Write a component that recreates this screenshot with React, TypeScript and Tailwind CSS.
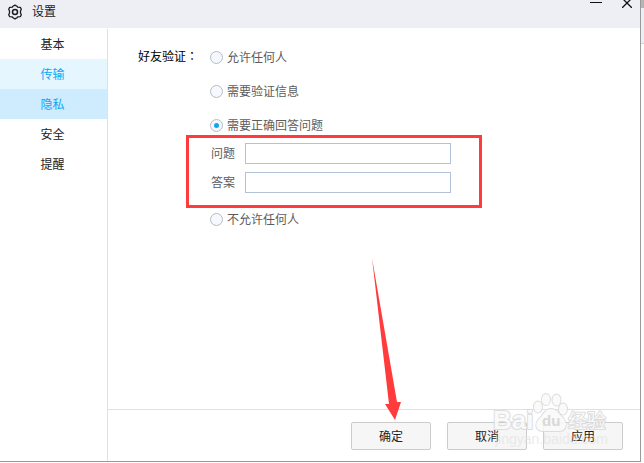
import { useState } from "react";

const navItems = ["基本", "传输", "隐私", "安全", "提醒"];

function navStyle(item: string) {
  if (item === "传输") return "bg-[#e6f6ff] text-[#10a5f5]";
  if (item === "隐私") return "bg-[#cfecff] text-[#10a5f5]";
  return "text-[#222222]";
}

function GearIcon() {
  return (
    <svg width="16" height="16" viewBox="0 0 16 16" fill="none" stroke="#1c1c1c" strokeWidth="1.3" strokeLinejoin="round" aria-hidden="true">
      <path d="M6 2.200 8 1.100l2 1.100.6 1 2.700.1 1 1.900-.8 1.800v2l.8 1.800-1 1.900-2.700.1-.6 1L8 14.900l-2-1.100-.6-1-2.700-.1-1-1.900.8-1.800V7l-.8-1.800 1-1.900 2.700-.1z" />
      <circle cx="8" cy="8" r="2.500" strokeWidth="1.500" />
    </svg>
  );
}

function TitleBar() {
  return (
    <header className="flex h-7 shrink-0 items-start justify-between bg-[#eeeff5] pr-2 pl-[7px]">
      <div className="flex items-center gap-[9px] pt-[3px]">
        <GearIcon />
        <h1 className="pt-px leading-4 text-[#222222]">设置</h1>
      </div>
      <div className="flex gap-5">
        <button type="button" aria-label="最小化" className="h-2">
          <svg width="12" height="8" viewBox="0 0 12 8" aria-hidden="true">
            <rect y="2" width="12" height="1" fill="#111111" />
          </svg>
        </button>
        <button type="button" aria-label="关闭" className="h-2">
          <svg width="10" height="8" viewBox="0 0 10 8" fill="none" stroke="#111111" strokeWidth="1.3" aria-hidden="true">
            <path d="M0-2 10 8M10-2 0 8" />
          </svg>
        </button>
      </div>
    </header>
  );
}

type ChoiceProps = { label: string; checked: boolean; onSelect: () => void };

function Choice({ label, checked, onSelect }: ChoiceProps) {
  return (
    <label className="flex h-[34px] items-center gap-1 text-[#5c5c5c]">
      <input
        type="radio"
        name="verify"
        checked={checked}
        onChange={onSelect}
        className="grid size-[13px] appearance-none place-items-center rounded-full border border-[#b6bcc4] bg-[#f5f9ff] before:size-[5px] before:rounded-full checked:before:bg-[#10a5f5]"
      />
      <span className="pt-0.5">{label}</span>
    </label>
  );
}

function Field({ id, label }: { id: string; label: string }) {
  return (
    <div className="flex items-center gap-2">
      <label htmlFor={id} className="w-[27px] pl-px text-[#5c5c5c]">{label}</label>
      <input id={id} type="text" className="h-[21px] w-[206px] border border-[#b4c2d7] bg-white px-1 outline-none" />
    </div>
  );
}

function ArrowMark() {
  return (
    <svg className="pointer-events-none absolute bottom-full left-5 mb-[2px]" width="32" height="162" viewBox="0 0 32 162" fill="#ff3b3b" aria-hidden="true">
      <path d="M1 0 26 144 30 144 24 162 14 146 18 146z" />
    </svg>
  );
}

function Watermark() {
  return (
    <svg className="pointer-events-none absolute right-6 bottom-3 z-10" width="124" height="58" viewBox="0 0 124 58" aria-hidden="true">
      <g fill="#fafafa" stroke="#d8d8d8" strokeWidth="2" strokeLinejoin="round" opacity="0.85" style={{ paintOrder: "stroke" }} className="font-['Liberation_Sans','Noto_Sans_CJK_SC',sans-serif]">
        <text x="1" y="38" fontSize="26" fontWeight="700">Bai</text>
        <ellipse cx="46" cy="16" rx="4" ry="5.5" />
        <ellipse cx="54" cy="8.5" rx="4" ry="5.5" />
        <ellipse cx="64.5" cy="9" rx="4" ry="5.5" />
        <ellipse cx="71" cy="18" rx="4" ry="5.5" />
        <path d="M59 18c6 0 8 5 11 8 4 4 5 7 3 11-2 4-7 3-14 3s-12 1-14-3c-2-4 0-7 4-11 3-3 4-8 10-8z" />
        <text x="76" y="37" fontSize="19" fontWeight="400">经验</text>
      </g>
      <text x="50" y="35" fontSize="15" fontWeight="700" fill="#d8d8d8" className="font-['Liberation_Sans',sans-serif]">du</text>
      <text x="3" y="53" fontSize="14" fill="#e4e4e4" fillOpacity="0.75" className="font-['Liberation_Sans',sans-serif]">jingyan.baidu.com</text>
    </svg>
  );
}

const buttonStyle = "h-7 w-20 rounded-[2px] border border-[#cccccc] bg-[#f6f6f6] pt-px leading-4 text-[#222222]";

export default function App() {
  const [choice, setChoice] = useState("answer");
  return (
    <div className="flex h-screen overflow-hidden bg-[#fcfcfc] pb-px font-['Liberation_Sans','Noto_Sans_CJK_SC',sans-serif] text-xs">
      <div className="flex min-w-0 flex-1 flex-col border-r border-b border-[#999999] bg-white">
        <TitleBar />
        <div className="flex min-h-0 flex-1 pt-px">
          <nav className="w-[108px] shrink-0 border-r border-[#e1e1e1]">
            {navItems.map((item) => (
              <button key={item} type="button" className={`block h-[30px] w-full pt-0.5 pr-0.5 ${navStyle(item)}`}>
                {item}
              </button>
            ))}
          </nav>
          <div className="flex min-w-0 flex-1 flex-col">
            <main className="flex-1 pt-[11px] pl-[30px]">
              <fieldset className="flex">
                <legend className="float-left w-[72px] pt-2 leading-4 text-black">
                  好友验证<span className="font-['Noto_Sans_CJK_TC',sans-serif]">：</span>
                </legend>
                <div>
                  <Choice label="允许任何人" checked={choice === "anyone"} onSelect={() => setChoice("anyone")} />
                  <Choice label="需要验证信息" checked={choice === "message"} onSelect={() => setChoice("message")} />
                  <Choice label="需要正确回答问题" checked={choice === "answer"} onSelect={() => setChoice("answer")} />
                  <div className="relative flex flex-col gap-2 pt-px pb-[9px]">
                    <Field id="question" label="问题" />
                    <Field id="reply" label="答案" />
                    <div className="pointer-events-none absolute -top-[7px] -left-6 h-[73px] w-[296px] border-3 border-[#ff3b3b]" />
                  </div>
                  <Choice label="不允许任何人" checked={choice === "nobody"} onSelect={() => setChoice("nobody")} />
                </div>
              </fieldset>
            </main>
            <footer className="relative flex justify-end gap-4 border-t border-[#e1e1e1] pt-3 pr-[17px] pb-[11px]">
              <div className="relative">
                <button type="button" className={buttonStyle}>确定</button>
                <ArrowMark />
              </div>
              <button type="button" className={buttonStyle}>取消</button>
              <button type="button" className={buttonStyle}>应用</button>
              <Watermark />
            </footer>
          </div>
        </div>
      </div>
      <div className="w-[3px] shrink-0">
        <div className="h-11 border-b border-[#d5d5d9] bg-[#eeeff5]">
          <div className="h-2 bg-[#b5b5b5]" />
        </div>
      </div>
    </div>
  );
}
